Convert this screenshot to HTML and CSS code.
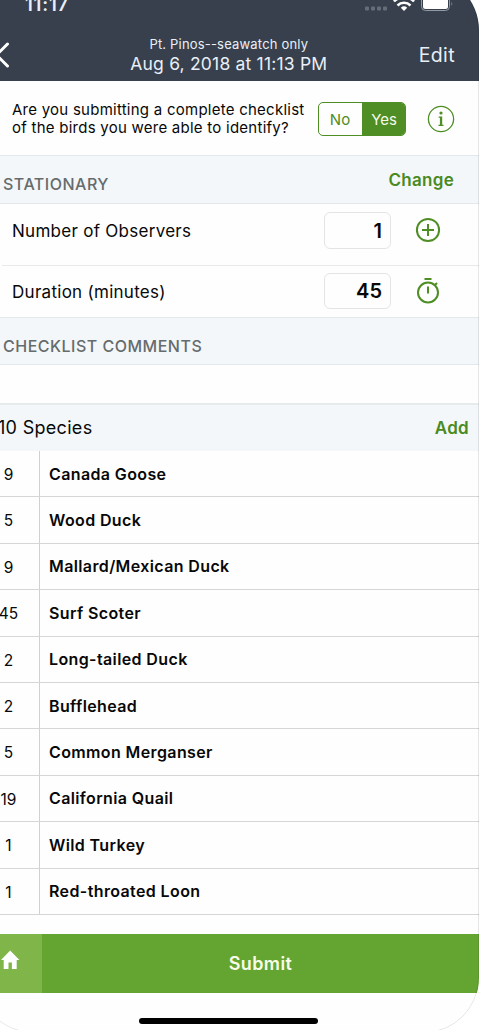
FILE: index.html
```html
<!DOCTYPE html>
<html lang="en">
<head>
<meta charset="utf-8">
<title>Checklist</title>
<link rel="stylesheet" href="styles.css">
</head>
<body>
<div class="phone">
  <header class="header">
    <div class="status">
      <span class="time">11:17</span>
      <svg class="status-icons" width="90" height="16" viewBox="0 0 90 16">
        <g fill="#646d78"><rect x="0" y="10.500" width="4" height="4" rx="1"/><rect x="6" y="10.500" width="4" height="4" rx="1"/><rect x="12" y="10.500" width="4" height="4" rx="1"/><rect x="18" y="10.500" width="4" height="4" rx="1"/></g>
        <g fill="none" stroke="#fff" stroke-width="2.500"><path d="M29 5.500a14 14 0 0 1 20 0"/><path d="M32.500 9.500a9.200 9.200 0 0 1 13 0"/></g>
        <path d="M39 15l-3.200-3.300a4.700 4.700 0 0 1 6.400 0z" fill="#fff"/>
        <rect x="56.500" y="0" width="28" height="14.500" rx="4" fill="none" stroke="#929aa3"/>
        <rect x="58" y="1" width="25" height="12" rx="2.500" fill="#fff"/>
        <path d="M86.500 5.500q1.500 2.200 0 4.500z" fill="#929aa3"/>
      </svg>
    </div>
    <div class="nav">
      <svg class="back" width="32" height="28" viewBox="0 0 32 28"><path d="M29.500 3L18.500 14 29.500 25" fill="none" stroke="#fff" stroke-width="3" stroke-linecap="round" stroke-linejoin="round"/></svg>
      <div class="titles">
        <div class="place">Pt. Pinos--seawatch only</div>
        <div class="date">Aug 6, 2018 at 11:13 PM</div>
      </div>
      <div class="edit">Edit</div>
    </div>
  </header>

  <section class="question">
    <p class="ask">Are you submitting a complete checklist<br>of the birds you were able to identify?</p>
    <div class="toggle"><span class="no">No</span><span class="yes">Yes</span></div>
    <svg class="info" width="28" height="28" viewBox="0 0 28 28"><circle cx="14" cy="14" r="12.600" fill="none" stroke="#4f8d25" stroke-width="1.300"/><circle cx="14" cy="8" r="1.600" fill="#4f8d25"/><path d="M11.700 11.500h3.500v8.200h1.300v1.200h-5v-1.200h1.400v-7h-1.200z" fill="#4f8d25"/></svg>
  </section>

  <div class="section stationary"><h2>STATIONARY</h2><span class="link change">Change</span></div>
  <div class="field observers">
    <span class="name">Number of Observers</span><span class="value">1</span>
    <svg class="icon" width="28" height="28" viewBox="0 0 28 28"><g fill="none" stroke="#4f8d25" stroke-width="2"><circle cx="14" cy="14" r="11.100"/><path d="M8 14h12M14 8v12"/></g></svg>
  </div>
  <div class="field duration">
    <span class="name">Duration (minutes)</span><span class="value">45</span>
    <svg class="icon" width="28" height="28" viewBox="0 0 28 28"><g fill="none" stroke="#4f8d25" stroke-width="2"><circle cx="14" cy="15.500" r="10"/><path d="M10.500 2h7M14 9.500v7M20.500 8.500l2.500-2.500"/></g></svg>
  </div>
  <div class="section comments"><h2>CHECKLIST COMMENTS</h2></div>
  <div class="blank"></div>
  <div class="species-head"><span class="total">10 Species</span><span class="link add">Add</span></div>
  <div class="list">
    <div class="bird"><span class="count">9</span><span class="label">Canada Goose</span></div>
    <div class="bird"><span class="count">5</span><span class="label">Wood Duck</span></div>
    <div class="bird"><span class="count">9</span><span class="label">Mallard/Mexican Duck</span></div>
    <div class="bird"><span class="count">45</span><span class="label">Surf Scoter</span></div>
    <div class="bird"><span class="count">2</span><span class="label">Long-tailed Duck</span></div>
    <div class="bird"><span class="count">2</span><span class="label">Bufflehead</span></div>
    <div class="bird"><span class="count">5</span><span class="label">Common Merganser</span></div>
    <div class="bird"><span class="count">19</span><span class="label">California Quail</span></div>
    <div class="bird"><span class="count">1</span><span class="label">Wild Turkey</span></div>
    <div class="bird"><span class="count">1</span><span class="label">Red-throated Loon</span></div>
  </div>
  <footer class="footer">
    <div class="home"><svg width="20" height="20" viewBox="0 0 20 20"><path d="M10.200 .600L1 10h2.700V19h4.800v-6.400h3.400V19h4.800v-9h2.700z" fill="#fff"/></svg></div>
    <div class="submit">Submit</div>
  </footer>
  <div class="indicator"></div>
</div>
</body>
</html>
```
FILE: styles.css
```css
* { box-sizing: border-box; }
html { overflow: hidden; background: #fff; }
body {
  margin: 0;
  width: 480px;
  height: 1030px;
  overflow: hidden;
  display: flow-root;
  font-family: Inter, "Liberation Sans", sans-serif;
  color: #080808;
  background: #fff;
}
.phone {
  position: relative;
  width: 501px;
  height: 1058px;
  margin: -25px 0 0 -22px;
  border-radius: 55px;
  overflow: hidden;
  background: #fefefe;
  display: flex;
  flex-direction: column;
}
.phone > * { flex-shrink: 0; }
.phone::after {
  content: "";
  position: absolute;
  inset: 0;
  border: 1px solid rgba(20, 20, 40, .1);
  border-radius: 55px;
  pointer-events: none;
}

.header { height: 106px; background: #37404c; color: #e9eff8; }
.status { height: 38px; display: flex; justify-content: space-between; padding: 0 24px 0 47px; }
.time { font-size: 18.5px; font-weight: 600; line-height: 20px; margin-top: 19px; letter-spacing: .8px; }
.status-icons { margin-top: 21px; flex: none; }
.nav { display: flex; height: 68px; padding-right: 24px; }
.back { margin-top: 28px; flex: none; }
.titles { flex: 1; margin-left: 29px; text-align: center; white-space: nowrap; }
.place { font-size: 13px; line-height: 18px; margin-top: 22px; letter-spacing: .18px; }
.date { font-size: 17.5px; line-height: 22px; letter-spacing: .2px; }
.edit { font-size: 19.5px; line-height: 24px; margin-top: 30px; letter-spacing: .4px; }

.question { height: 74px; display: flex; padding: 0 24px 0 34px; }
.ask { margin: 20px 0 0; width: 306px; font-size: 15px; line-height: 18px; letter-spacing: .25px; white-space: nowrap; }
.toggle {
  width: 88px;
  height: 34px;
  margin-top: 21px;
  border: 1px solid #4f8d25;
  border-radius: 5px;
  display: flex;
  overflow: hidden;
  font-size: 15px;
  line-height: 33px;
  text-align: center;
  color: #4f8d25;
}
.no { width: 43px; padding-right: 1px; }
.yes { flex: 1; padding-left: 1px; background: #4f8d25; color: #f6fbe8; }
.info { margin: 24px 0 0 21px; flex: none; }

.section {
  height: 48px;
  display: flex;
  justify-content: space-between;
  align-items: flex-start;
  padding: 0 25px;
  background: #f3f7f9;
  border: solid #e3e8ea;
  border-width: 1px 0;
}
.section h2 { margin: 18px 0 0; font-size: 16px; line-height: 20px; font-weight: 500; letter-spacing: .5px; color: #666b6c; white-space: nowrap; }
.link { color: #4a8a20; font-size: 17px; font-weight: 600; line-height: 22px; letter-spacing: .3px; }
.change { margin-top: 13px; }
.stationary { height: 49px; }
.field { display: flex; padding: 0 36px 0 34px; }
.observers { height: 62px; border-bottom: 1px solid #e7e9eb; margin-left: 24px; padding-left: 10px; }
.duration { height: 51px; }
.name { flex: 1; font-size: 17px; line-height: 22px; margin-top: 16px; letter-spacing: .28px; white-space: nowrap; }
.value {
  width: 67px;
  height: 37px;
  margin-top: 8px;
  padding-right: 8px;
  border: 1px solid #e3e4e6;
  border-radius: 6px;
  text-align: right;
  font-size: 20px;
  font-weight: 600;
  line-height: 36px;
}
.icon { margin: 12px 1px 0 23px; flex: none; }
.duration .name { margin-top: 15px; }
.duration .value { height: 36px; line-height: 34px; margin-top: 7px; }
.duration .icon { margin-top: 11px; }
.blank { height: 38px; }
.species-head {
  height: 48px;
  display: flex;
  justify-content: space-between;
  padding: 0 10px 0 20px;
  border-top: 2px solid #e7ebec;
  background: #f3f7f9;
}
.total { font-size: 18px; line-height: 24px; margin-top: 11px; letter-spacing: .3px; white-space: nowrap; }
.add { margin-top: 12px; }
.list { display: grid; grid-template-rows: repeat(10, 1fr); height: 464px; }
.bird { display: flex; align-items: center; border-bottom: 1px solid #d5d6d8; }
.count { width: 62px; height: 100%; padding-top: 13px; border-right: 1px solid #cfd0d2; text-align: center; font-size: 15.5px; line-height: 22px; }
.label { padding-left: 9px; font-size: 16px; font-weight: 600; line-height: 22px; letter-spacing: .38px; white-space: nowrap; }
.footer { height: 59px; margin-top: 19px; display: flex; }
.home { width: 64px; background: #7fb549; padding: 16px 0 0 22px; }
.submit { flex: 1; background: #64a430; color: #f8fde9; font-size: 18px; font-weight: 600; line-height: 60px; letter-spacing: .4px; text-align: center; }
.indicator { width: 179px; height: 6px; margin: 25px auto 0; background: #000; border-radius: 3px; }
```
